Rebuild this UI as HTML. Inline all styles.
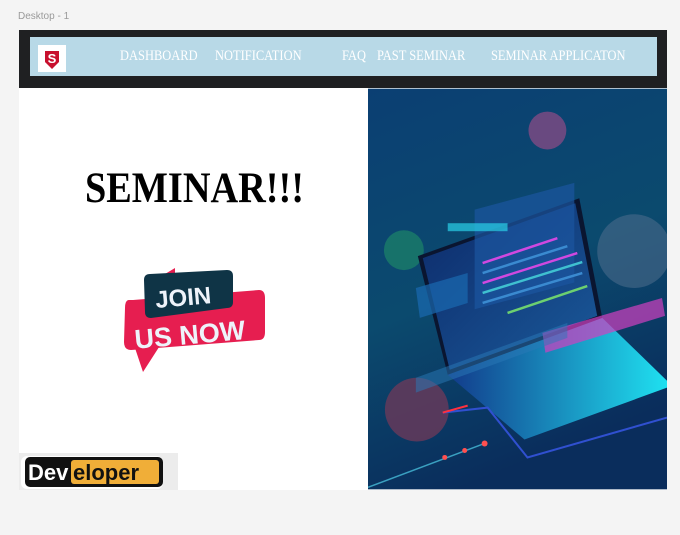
<!DOCTYPE html>
<html><head><meta charset="utf-8"><style>
*{margin:0;padding:0;box-sizing:border-box}
body{width:680px;height:535px;background:#f4f4f4;position:relative;overflow:hidden;font-family:"Liberation Sans",sans-serif}
.lbl{position:absolute;left:18px;top:11px;font-size:10px;color:#9a9a9a}
.frame{position:absolute;left:19px;top:30px;width:648px;height:460px;background:#fff}
.nav{position:absolute;left:0;top:0;width:648px;height:58px;background:#1f2022}
.bar{position:absolute;left:11px;top:7px;width:627px;height:39px;background:#b8d9e7}
.logo{position:absolute;left:8px;top:8px;width:28px;height:27px;background:#fff}
.nav a{position:absolute;top:11px;color:#fff;font-family:"Liberation Serif",serif;font-size:14.5px;transform:scaleX(.86);transform-origin:left;white-space:nowrap}
.sem{position:absolute;left:66px;top:134px;font-family:"Liberation Serif",serif;font-weight:bold;font-size:43px;color:#000;transform:scaleX(.89);transform-origin:left;white-space:nowrap}
.img{position:absolute;left:349px;top:58px;width:299px;height:402px}
.dev{position:absolute;left:0;top:423px;width:159px;height:37px;background:#ececec}
</style></head><body>
<div class="lbl">Desktop - 1</div>
<div class="frame">
<div class="nav"><div class="bar">
<div class="logo"><svg width="28" height="27" viewBox="0 0 28 27"><path d="M7 6 L21 6 L21 17 Q14 24 14 24 Q7 17 7 17Z" fill="#c8102e"/><text x="14" y="18" font-family="Liberation Sans" font-weight="bold" font-size="13" fill="#fff" text-anchor="middle">S</text></svg></div>
<a style="left:90px">DASHBOARD</a>
<a style="left:185px">NOTIFICATION</a>
<a style="left:312px">FAQ</a>
<a style="left:347px">PAST SEMINAR</a>
<a style="left:461px">SEMINAR APPLICATON</a>
</div></div>
<div class="sem">SEMINAR!!!</div>
<svg style="position:absolute;left:100px;top:236px" width="150" height="110" viewBox="0 0 150 110">
<polygon points="46,8 56,2 56,20" fill="#e61e50"/>
<polygon points="12,70 24,106 42,78" fill="#e61e50"/>
<path d="M10 34 Q6 34 6 42 L5 76 Q5 84 12 84 L140 74 Q146 74 146 66 L146 32 Q146 24 140 24 L14 34Z" fill="#e61e50"/>
<path d="M25 14 Q25 8 31 8 L108 4 Q114 4 114 10 L114 36 Q114 42 108 42 L32 52 Q26 52 26 46Z" fill="#0f3446"/>
<text x="36" y="40" font-family="Liberation Sans" font-weight="bold" font-size="24" fill="#eef3fa" transform="rotate(-5 60 30)">JOIN</text>
<text x="15" y="78" font-family="Liberation Sans" font-weight="bold" font-size="27" fill="#eef3fa" transform="rotate(-5 70 65)">US NOW</text>
</svg>
<div class="img"><svg width="299" height="402" viewBox="0 0 300 402">
<defs>
<linearGradient id="bg" x1="0" y1="0" x2="0.3" y2="1"><stop offset="0" stop-color="#0b3f73"/><stop offset=".55" stop-color="#0b4a6e"/><stop offset="1" stop-color="#0a2d5c"/></linearGradient>
<linearGradient id="kb" x1="0" y1="0" x2="1" y2="0"><stop offset="0" stop-color="#123a8a"/><stop offset="1" stop-color="#1fe0f0"/></linearGradient>
<linearGradient id="scr" x1="0" y1="0" x2="1" y2="1"><stop offset="0" stop-color="#0d2a6a"/><stop offset="1" stop-color="#1a5a9a"/></linearGradient>
</defs>
<rect width="300" height="402" fill="url(#bg)"/>
<circle cx="180" cy="42" r="19" fill="#7a4a82" opacity=".85"/>
<circle cx="36" cy="162" r="20" fill="#1a7a6a" opacity=".85"/>
<circle cx="267" cy="163" r="37" fill="#4a6a8a" opacity=".6"/>
<circle cx="49" cy="322" r="32" fill="#6a3a5a" opacity=".8"/>
<polygon points="80,287 235,230 300,293 300,300 157,352" fill="url(#kb)"/>
<polygon points="50,168 212,110 235,230 80,287" fill="#0a1530"/>
<polygon points="55,170 208,115 230,228 82,282" fill="url(#scr)"/>
<rect x="107" y="150" width="100" height="100" fill="#1b56a0" opacity=".7" transform="skewY(-15)"/>
<g stroke-width="2.5">
<line x1="115" y1="175" x2="190" y2="150" stroke="#d048e0"/>
<line x1="115" y1="185" x2="200" y2="158" stroke="#3a8ad0"/>
<line x1="115" y1="195" x2="210" y2="165" stroke="#d048e0"/>
<line x1="115" y1="205" x2="215" y2="174" stroke="#3fc0d0"/>
<line x1="115" y1="215" x2="215" y2="185" stroke="#3a8ad0"/>
<line x1="140" y1="225" x2="220" y2="198" stroke="#6cd070"/>
</g>
<rect x="80" y="135" width="60" height="8" fill="#2ad0e8" opacity=".7"/>
<polygon points="48,200 100,185 100,215 52,230" fill="#1a6ab0" opacity=".7"/>
<polygon points="175,245 295,210 298,228 178,265" fill="#d040c0" opacity=".7"/>
<polygon points="48,290 200,235 200,250 48,305" fill="#2a7ab8" opacity=".5"/>
<path d="M75,325 L120,320 L160,370 L300,330" stroke="#3050d0" stroke-width="2" fill="none"/>
<path d="M75,325 L100,318" stroke="#ff3040" stroke-width="2"/>
<path d="M0,400 L117,356" stroke="#3aa0c0" stroke-width="1.5"/>
<circle cx="117" cy="356" r="3" fill="#ff5050"/><circle cx="97" cy="363" r="2.5" fill="#ff5050"/><circle cx="77" cy="370" r="2.5" fill="#ff5050"/>
</svg></div>
<div class="dev"><svg width="159" height="37" viewBox="0 0 159 37">
<rect x="2" y="3" width="142" height="33" rx="6" fill="#fff"/>
<rect x="6" y="4" width="138" height="30" rx="5" fill="#111"/>
<rect x="52" y="7" width="88" height="24" rx="3" fill="#f0ae38"/>
<text x="9" y="27" font-family="Liberation Sans" font-weight="bold" font-size="22" fill="#fff">Dev</text>
<text x="54" y="27" font-family="Liberation Sans" font-weight="bold" font-size="22" fill="#111">eloper</text>
</svg></div>
</div>
</body></html>
